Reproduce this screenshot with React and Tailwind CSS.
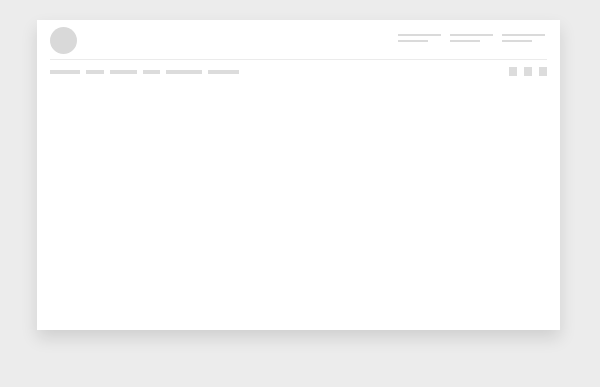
export default function App() {
  const navs = [30, 18, 27, 17, 36, 31];
  return (
    <div className="w-[600px] h-[387px] bg-[#ececec] pt-[20px] pl-[37px]" style={{ fontFamily: '"Liberation Sans", sans-serif' }}>
      <div className="w-[523px] h-[310px] bg-white shadow-[0_8px_16px_rgba(0,0,0,0.12)] px-[13px]">
        <div className="flex items-start justify-between border-b border-[#ebebeb] pt-[7px] h-[40px]">
          <div className="w-[27px] h-[27px] rounded-full bg-[#d9d9d9]" />
          <div className="flex gap-[9px] mt-[7px] mr-[2px]">
            {[0, 1, 2].map((i) => (
              <div key={i} className="flex flex-col gap-[4px] w-[43px]">
                <div className="h-[2px] w-[43px] bg-[#dadada]" />
                <div className="h-[2px] w-[30px] bg-[#dadada]" />
              </div>
            ))}
          </div>
        </div>
        <div className="flex items-center justify-between pt-[7px]">
          <div className="flex gap-[6px]">
            {navs.map((w, i) => (
              <div key={i} className="h-[4px] bg-[#dcdcdc]" style={{ width: w }} />
            ))}
          </div>
          <div className="flex gap-[7px]">
            {[0, 1, 2].map((i) => (
              <div key={i} className="w-[8px] h-[9px] bg-[#dcdcdc]" />
            ))}
          </div>
        </div>
      </div>
    </div>
  );
}
